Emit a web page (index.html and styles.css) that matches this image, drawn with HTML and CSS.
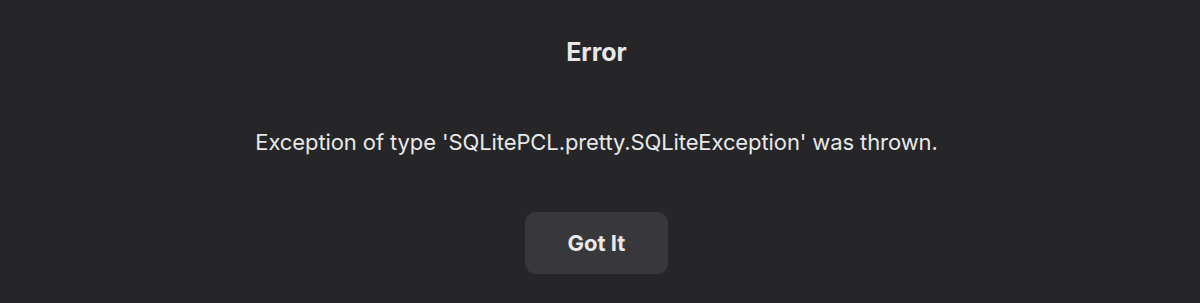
FILE: index.html
```html
<!DOCTYPE html>
<html lang="en">
<head>
  <meta charset="UTF-8">
  <title>Error</title>
  <link rel="stylesheet" href="styles.css">
</head>
<body>
  <div class="dialog">
    <h1 class="dialog-title">Error</h1>
    <p class="dialog-message">Exception of type 'SQLitePCL.pretty.SQLiteException' was thrown.</p>
    <button type="button" class="dialog-button">Got It</button>
  </div>
</body>
</html>
```

FILE: styles.css
```css
* {
  box-sizing: border-box;
  margin: 0;
  padding: 0;
}

body {
  font-family: Inter, "Noto Sans", sans-serif;
  background-color: #262628;
  color: #e8e8e8;
  height: 303px;
  overflow: hidden;
}

.dialog {
  display: flex;
  flex-direction: column;
  align-items: center;
  padding: 37px 7px 0 0;
}

.dialog-title {
  font-size: 25px;
  font-weight: 700;
  line-height: 30px;
}

.dialog-message {
  margin-top: 62px;
  font-size: 22px;
  line-height: 26px;
  letter-spacing: -0.1px;
}

.dialog-button {
  margin-top: 57px;
  width: 143px;
  height: 62px;
  border: none;
  border-radius: 11px;
  background-color: #38383c;
  color: #e8e8e8;
  font-family: inherit;
  font-size: 22px;
  font-weight: 700;
  cursor: pointer;
}
```
